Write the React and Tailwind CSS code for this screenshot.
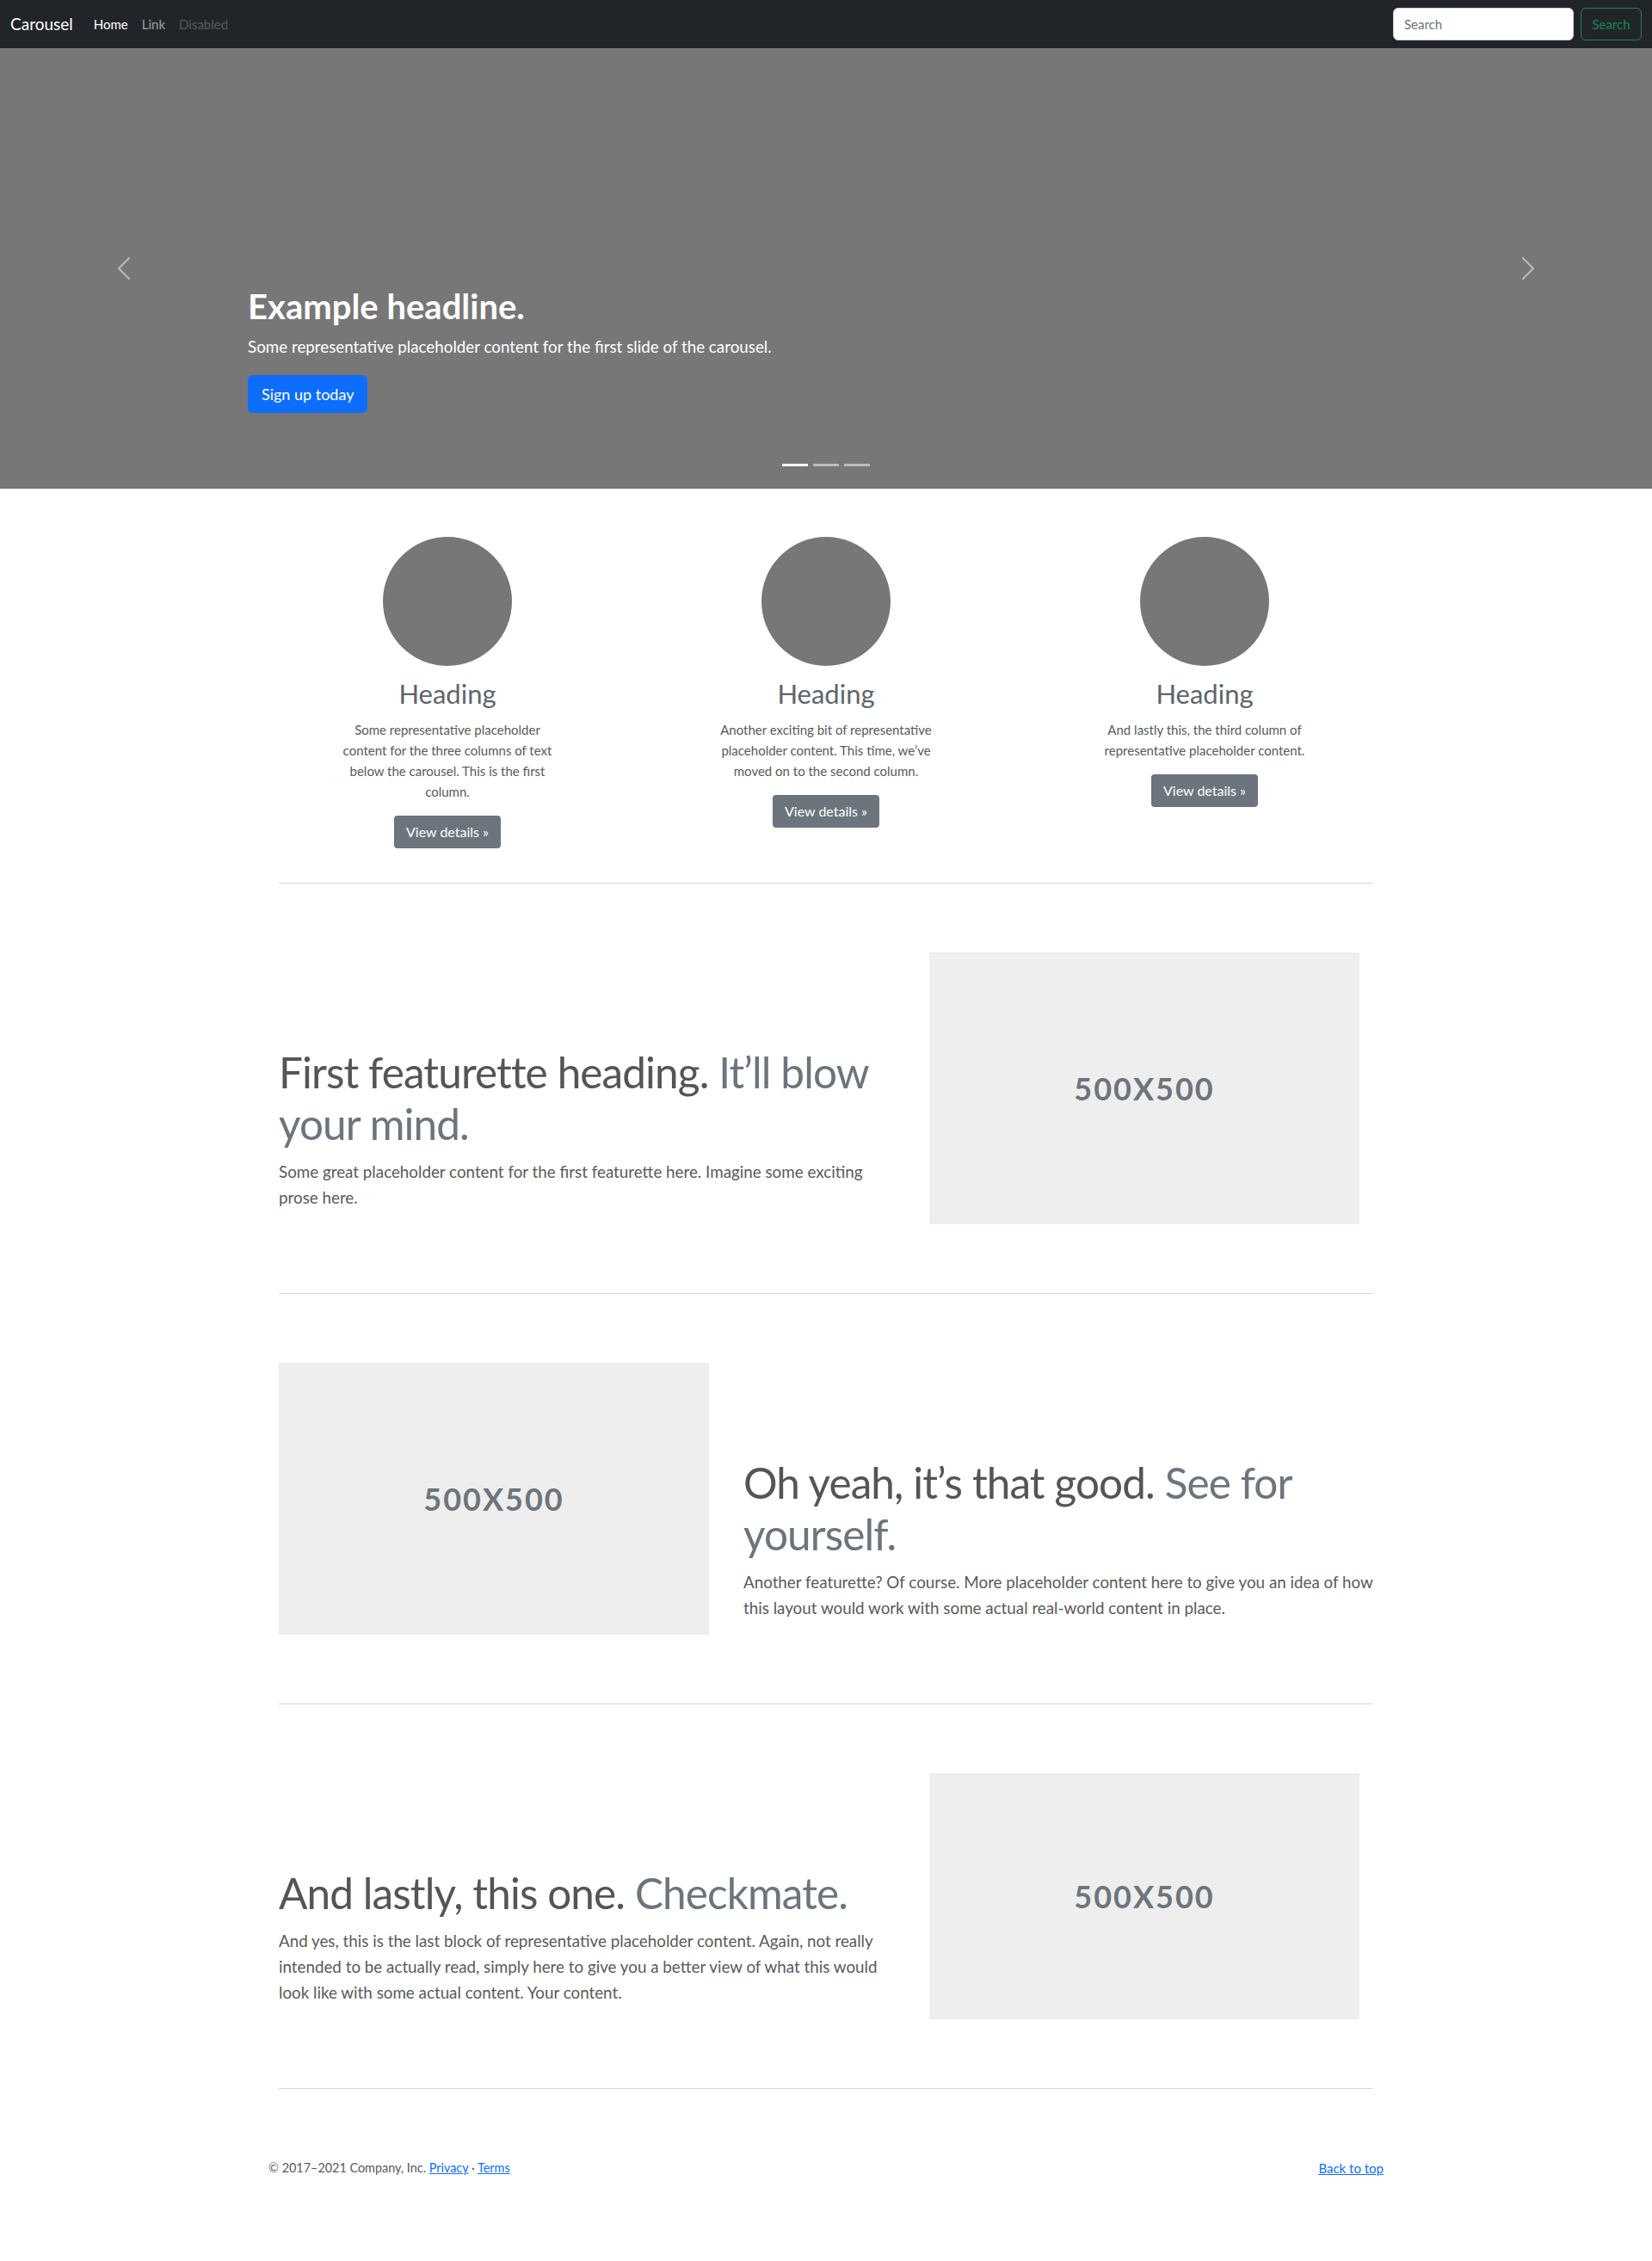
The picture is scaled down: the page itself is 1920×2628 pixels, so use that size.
import React from 'react';

const ChevronLeft = () => (
  <svg viewBox="0 0 16 16" className="w-8 h-8" fill="#ffffff" fillOpacity="0.5">
    <path d="M11.354 1.646a.5.5 0 0 1 0 .708L5.707 8l5.647 5.646a.5.5 0 0 1-.708.708l-6-6a.5.5 0 0 1 0-.708l6-6a.5.5 0 0 1 .708 0z" />
  </svg>
);

const ChevronRight = () => (
  <svg viewBox="0 0 16 16" className="w-8 h-8" fill="#ffffff" fillOpacity="0.5">
    <path d="M4.646 1.646a.5.5 0 0 1 .708 0l6 6a.5.5 0 0 1 0 .708l-6 6a.5.5 0 0 1-.708-.708L10.293 8 4.646 2.354a.5.5 0 0 1 0-.708z" />
  </svg>
);

const columns = [
  {
    lines: ['Some representative placeholder', 'content for the three columns of text', 'below the carousel. This is the first', 'column.'],
  },
  {
    lines: ['Another exciting bit of representative', 'placeholder content. This time, we’ve', 'moved on to the second column.'],
  },
  {
    lines: ['And lastly this, the third column of', 'representative placeholder content.'],
  },
];

const Placeholder = () => (
  <div className="w-[500px] h-full bg-[#eeeeee] flex items-center justify-center">
    <span className="text-[36px] font-bold tracking-[2px] text-[#6c757d]">500X500</span>
  </div>
);

const Lines = ({ lines }) =>
  lines.map((l, i) => (
    <span key={i} className="block whitespace-nowrap">
      {l}
    </span>
  ));

const Featurette = ({ title, muted, lead, reverse }) => {
  const text = (
    <div className="pt-[109px] pb-4">
      <h2 className="text-[49.5px] leading-[60px] tracking-[-0.9px] text-[#555555] mb-[11px] font-normal">
        {title} <span className="text-[#6c757d]">{muted}</span>
      </h2>
      <p className="text-[18.8px] leading-[30px] text-[#5a5a5a]">
        <Lines lines={lead} />
      </p>
    </div>
  );
  const image = (
    <div className="flex">
      <Placeholder />
    </div>
  );
  return (
    <div className={reverse ? 'grid grid-cols-[516px_732px] gap-6' : 'grid grid-cols-[732px_516px] gap-6'}>
      {reverse ? image : text}
      {reverse ? text : image}
    </div>
  );
};

export default function App() {
  return (
    <div className="min-h-screen bg-white [font-family:Lato,sans-serif] text-[#5a5a5a]">
      {/* navbar */}
      <nav className="h-14 bg-[#212529] flex items-center px-3">
        <a className="text-white text-[19px] mr-4">Carousel</a>
        <div className="flex items-center text-[15px]">
          <a className="px-2 text-white">Home</a>
          <a className="px-2 text-white/55">Link</a>
          <a className="px-2 text-white/25">Disabled</a>
        </div>
        <div className="ml-auto flex items-center gap-2">
          <input
            placeholder="Search"
            className="w-[210px] h-[38px] rounded-[6px] border border-[#ced4da] bg-white px-3 text-[15px] text-[#212529] placeholder:text-[#6c757d] outline-none"
          />
          <button className="w-[71px] h-[38px] rounded-[6px] border border-[#198754] text-[#198754] text-[15px]">
            Search
          </button>
        </div>
      </nav>

      {/* carousel */}
      <div className="relative h-[512px] bg-[#777777] flex flex-col justify-end px-[15%] pb-[88px] text-white">
        <h1 className="text-[40px] leading-[48px] font-bold mb-2">Example headline.</h1>
        <p className="text-[18.8px] leading-[30px] mb-[18px]">
          Some representative placeholder content for the first slide of the carousel.
        </p>
        <div>
          <button className="h-[44px] px-4 rounded-[6px] bg-[#0d6efd] text-white text-[18px]">Sign up today</button>
        </div>

        <button className="absolute left-0 top-0 bottom-0 w-[15%] flex items-center justify-center">
          <ChevronLeft />
        </button>
        <button className="absolute right-0 top-0 bottom-0 w-[15%] flex items-center justify-center">
          <ChevronRight />
        </button>
        <div className="absolute left-1/2 -translate-x-1/2 bottom-[26px] flex gap-[6px]">
          <span className="w-[30px] h-[3px] bg-white"></span>
          <span className="w-[30px] h-[3px] bg-white/50"></span>
          <span className="w-[30px] h-[3px] bg-white/50"></span>
        </div>
      </div>

      {/* marketing */}
      <div className="w-[1320px] mx-auto pt-14">
        <div className="grid grid-cols-3 items-start">
          {columns.map((c, i) => (
            <div key={i} className="flex flex-col items-center text-center">
              <div className="w-[150px] h-[150px] rounded-full bg-[#777777]"></div>
              <h2 className="mt-[13px] mb-[11px] text-[31px] leading-[38px] font-normal text-[#5e646b]">Heading</h2>
              <p className="text-[15px] leading-6 mb-4 text-[#5a5a5a]">
                <Lines lines={c.lines} />
              </p>
              <button className="h-[38px] px-[14px] rounded-[4px] bg-[#6c757d] text-white text-[16px]">
                View details »
              </button>
            </div>
          ))}
        </div>

        <div className="px-6">
          <hr className="mt-10 mb-20 border-0 border-t border-[#d9d9d9]" />

          <Featurette
            title="First featurette heading."
            muted="It’ll blow your mind."
            lead={['Some great placeholder content for the first featurette here. Imagine some exciting', 'prose here.']}
          />

          <hr className="my-20 border-0 border-t border-[#d9d9d9]" />

          <Featurette
            reverse
            title="Oh yeah, it’s that good."
            muted="See for yourself."
            lead={[
              'Another featurette? Of course. More placeholder content here to give you an idea of how',
              'this layout would work with some actual real-world content in place.',
            ]}
          />

          <hr className="my-20 border-0 border-t border-[#d9d9d9]" />

          <Featurette
            title="And lastly, this one."
            muted="Checkmate."
            lead={[
              'And yes, this is the last block of representative placeholder content. Again, not really',
              'intended to be actually read, simply here to give you a better view of what this would',
              'look like with some actual content. Your content.',
            ]}
          />

          <hr className="mt-20 border-0 border-t border-[#d9d9d9]" />
        </div>
      </div>

      {/* footer */}
      <footer className="w-[1320px] mx-auto px-3 pt-20 pb-4 flex justify-between leading-6 text-[#5a5a5a]">
        <p className="text-[14.4px]">
          © 2017–2021 Company, Inc. <a className="text-[#0d6efd] underline">Privacy</a> ·{' '}
          <a className="text-[#0d6efd] underline">Terms</a>
        </p>
        <a className="text-[15px] text-[#0d6efd] underline">Back to top</a>
      </footer>
    </div>
  );
}
